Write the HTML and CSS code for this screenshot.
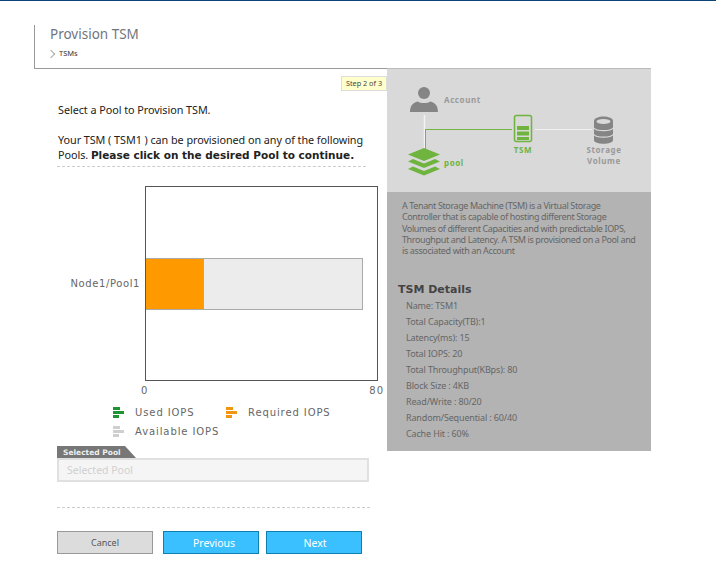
FILE: index.html
```html
<!DOCTYPE html>
<html>
<head>
<meta charset="UTF-8">
  <meta name="viewport" content="width=device-width, initial-scale=1.0">
  <title>Provision TSM</title>
  <link rel="stylesheet" href="styles.css">
</head>
<body>
<div id="topbar"></div>
<div id="page">
  <div id="header">
    <h1>Provision TSM</h1>
    <div id="crumb"><span class="crumb-arrow"></span>TSMs</div>
  </div>
  <div id="content">
    <div id="wizard">
      <div id="step">Step 2 of 3</div>
      <div id="intro">
        <p>Select a Pool to Provision TSM.</p>
        <p>Your TSM ( TSM1 ) can be provisioned on any of the following Pools. <b>Please click on the desired Pool to continue.</b></p>
      </div>

      <div id="chart">
        <div class="chart-row">
          <div class="chart-label">Node1/Pool1</div>
          <div class="chart-frame">
            <div class="bar"><div class="bar-used"></div></div>
          </div>
        </div>
        <div class="chart-axis"><span>0</span><span>80</span></div>
        <div class="legend">
          <div class="legend-item">
            <svg width="11" height="11" viewBox="0 0 11 11"><path fill="#1e9432" d="M0 0h7v3H0zM0 4h11v3H0zM0 8h6v3H0z"/></svg>
            Used IOPS
          </div>
          <div class="legend-item">
            <svg width="11" height="11" viewBox="0 0 11 11"><path fill="#f0960f" d="M0 0h7v3H0zM0 4h11v3H0zM0 8h6v3H0z"/></svg>
            Required IOPS
          </div>
          <div class="legend-item">
            <svg width="11" height="11" viewBox="0 0 11 11"><path fill="#cfcfcf" d="M0 0h7v3H0zM0 4h11v3H0zM0 8h6v3H0z"/></svg>
            Available IOPS
          </div>
        </div>
      </div>

      <div id="selected">
        <div class="tab">Selected Pool</div>
        <input type="text" placeholder="Selected Pool" disabled>
      </div>

      <div id="buttons">
        <button class="btn btn-cancel">Cancel</button>
        <button class="btn btn-blue">Previous</button>
        <button class="btn btn-blue">Next</button>
      </div>
    </div>

    <div id="side">
      <div id="diagram">
        <svg width="264" height="123" viewBox="0 0 264 123">
          <path d="M37.500 46v34" stroke="#f2f2f2" stroke-width="1.500" fill="none"/>
          <path d="M38 60.500h87M38.500 60v20" stroke="#74b545" stroke-width="1" fill="none"/>
          <path d="M148 60.500h57" stroke="#f2f2f2" stroke-width="1" fill="none"/>
          <!-- account -->
          <circle cx="37" cy="24" r="6" fill="#858585"/>
          <path d="M23 43c0-8 5-10 8-10.500 2 2 10 2 12 0 3 .5 8 2.500 8 10.500z" fill="#858585"/>
          <!-- pool -->
          <path d="M37 79l16 6.500-16 6.500-16-6.500z" fill="#6fb43f"/>
          <path d="M26 90l11 4.500 11-4.500 5 2.500-16 6.500-16-6.500z" fill="#6fb43f"/>
          <path d="M26 97.500l11 4.500 11-4.500 5 2.500-16 6.500-16-6.500z" fill="#6fb43f"/>
          <!-- tsm -->
          <rect x="127.500" y="46.500" width="17" height="26" rx="2" fill="none" stroke="#6fb43f" stroke-width="1.500"/>
          <path d="M130 57h12v4h-12zM130 62.500h12v4h-12zM130 68h12v3h-12z" fill="#6fb43f"/>
          <!-- volume -->
          <path d="M207 52c0-6 19-6 19 0v19c0 5-19 5-19 0z" fill="#858585"/>
          <ellipse cx="216.500" cy="52.500" rx="7" ry="2.500" fill="#d9d9d9"/>
          <path d="M207 59c2 3.500 17 3.500 19 0M207 65.500c2 3.500 17 3.500 19 0" stroke="#d9d9d9" stroke-width="1.200" fill="none"/>
          <text class="dg-text" x="57" y="34">Account</text>
          <text class="dg-text dg-green" x="57" y="97">pool</text>
          <text class="dg-text dg-green" x="136" y="84" text-anchor="middle">TSM</text>
          <text class="dg-text" x="217" y="84" text-anchor="middle">Storage</text>
          <text class="dg-text" x="217" y="95" text-anchor="middle">Volume</text>
        </svg>
      </div>
      <div id="details">
        <p id="about">A Tenant Storage Machine (TSM) is a Virtual Storage Controller that is capable of hosting different Storage Volumes of different Capacities and with predictable IOPS, Throughput and Latency. A TSM is provisioned on a Pool and is associated with an Account</p>
        <h2>TSM Details</h2>
        <ul>
          <li>Name: TSM1</li>
          <li>Total Capacity(TB):1</li>
          <li>Latency(ms): 15</li>
          <li>Total IOPS: 20</li>
          <li>Total Throughput(KBps): 80</li>
          <li>Block Size : 4KB</li>
          <li>Read/Write : 80/20</li>
          <li>Random/Sequential : 60/40</li>
          <li>Cache Hit : 60%</li>
        </ul>
      </div>
    </div>
  </div>
</div>
</body>
</html>
```
FILE: styles.css
```css
body {
  font-family: "Noto Sans", Arial, sans-serif;
  margin: 0;
  padding: 0;
  background: #fff;
  color: #222;
  font-size: 11px;
}

#topbar {
  height: 1px;
  background: #0d4478;
}

#page {
  padding: 24px 0 0 34px;
}

/* page title */
#header {
  width: 353px;
  height: 43px;
  box-sizing: border-box;
  border-left: 1px solid #999;
  padding-left: 15px;
}

h1 {
  margin: 0;
  font-size: 13.500px;
  font-weight: normal;
  line-height: 19px;
  color: #6f7680;
}

#crumb {
  display: flex;
  align-items: center;
  margin-top: 4px;
  font-size: 7.500px;
  line-height: 11px;
  color: #333;
}

.crumb-arrow {
  width: 5px;
  height: 5px;
  margin: 0 5px 0 -2px;
  border-top: 1px solid #aaa;
  border-right: 1px solid #aaa;
  transform: rotate(45deg);
}

#content {
  display: flex;
  align-items: flex-start;
}

/* left column */
#wizard {
  position: relative;
  width: 353px;
  height: 492px;
  box-sizing: border-box;
  border-top: 1px solid #999;
  padding: 33px 0 0 23px;
}

#step {
  position: absolute;
  top: 7px;
  right: 0;
  width: 46px;
  height: 15px;
  box-sizing: border-box;
  background: #ffffcc;
  border: 1px solid #ddd;
  font-size: 7.300px;
  line-height: 13px;
  text-align: center;
  color: #444;
}

#intro {
  width: 309px;
  height: 64px;
  border-bottom: 1px dashed #ccc;
  font-size: 10.800px;
  line-height: 15px;
  letter-spacing: -0.05px;
}

#intro p {
  margin: 0 -8px 15px 1px;
}

#intro b {
  font-family: "DejaVu Sans", sans-serif;
  font-size: 10.500px;
  letter-spacing: 0;
}

#chart {
  margin-top: 19px;
  font-family: "DejaVu Sans", sans-serif;
  font-size: 10px;
  color: #666;
}

.chart-row {
  display: flex;
  align-items: center;
}

.chart-label {
  width: 83px;
  padding-right: 5px;
  text-align: right;
  letter-spacing: 0.6px;
  white-space: nowrap;
}

.chart-frame {
  display: flex;
  align-items: center;
  width: 233px;
  height: 195px;
  box-sizing: border-box;
  border: 1px solid #555;
}

.bar {
  width: 217px;
  height: 52px;
  box-sizing: border-box;
  background: #ececec;
  border: 1px solid #aaa;
  border-left: 0;
}

.bar-used {
  width: 57px;
  height: 100%;
  background: #ff9900;
  border-right: 1px solid #aaa;
}

.chart-axis {
  display: flex;
  justify-content: space-between;
  width: 243px;
  margin: 3px 0 0 84px;
  line-height: 14px;
  letter-spacing: 1px;
}

.legend {
  display: flex;
  flex-wrap: wrap;
  width: 230px;
  margin: 5px 0 0 56px;
  letter-spacing: 0.9px;
}

.legend-item {
  display: flex;
  align-items: center;
  gap: 11px;
  min-width: 113px;
  height: 19px;
}

/* selected pool */
#selected {
  margin-top: 5px;
}

.tab {
  width: 79px;
  height: 12px;
  padding-left: 6px;
  box-sizing: border-box;
  background: #777;
  clip-path: polygon(0 0, 68px 0, 100% 100%, 0 100%);
  font-family: "DejaVu Sans", sans-serif;
  font-size: 7.500px;
  font-weight: bold;
  line-height: 14px;
  color: #eee;
}

#selected input {
  display: block;
  width: 312px;
  height: 24px;
  box-sizing: border-box;
  padding: 0 8px 1px;
  background: #f5f5f5;
  border: 2px solid #e0e0e0;
  font-family: "Noto Sans", Arial, sans-serif;
  font-size: 10.500px;
}

#selected input::placeholder {
  color: #d0d0d0;
}

/* buttons */
#buttons {
  display: flex;
  width: 313px;
  margin-top: 25px;
  padding-top: 23px;
  border-top: 1px dashed #ccc;
}

.btn {
  flex: none;
  width: 96px;
  height: 23px;
  margin-right: 10px;
  box-sizing: border-box;
  padding: 0;
  font-family: "Noto Sans", Arial, sans-serif;
  font-size: 10.500px;
}

.btn + .btn + .btn {
  margin-left: -3px;
}

.btn-cancel {
  background: #dcdcdc;
  border: 1px solid #999;
  font-size: 9px;
  color: #555;
}

.btn-blue {
  padding-left: 2px;
  background: #3bc0ff;
  border: 1px solid #0e7fae;
  color: #fff;
}

.btn-cancel + .btn-blue {
  padding-left: 6px;
}

/* right column */
#side {
  width: 264px;
  background: #b3b3b3;
}

#diagram {
  height: 124px;
  background: #d9d9d9;
  border-top: 1px solid #bbb;
  box-sizing: border-box;
}

#diagram svg {
  display: block;
}

.dg-text {
  font-family: "Noto Sans", sans-serif;
  font-size: 8px;
  font-weight: bold;
  letter-spacing: 0.6px;
  fill: #999;
}

.dg-green {
  fill: #6fb43f;
}

#details {
  height: 259px;
  box-sizing: border-box;
  padding: 8px 12px 0 15px;
  color: #666;
  font-size: 9px;
}

#about {
  margin: 0;
  line-height: 11.300px;
  width: 236px;
  letter-spacing: -0.38px;
}

h2 {
  margin: 27px 0 0 -4px;
  font-family: "DejaVu Sans", sans-serif;
  font-size: 11px;
  line-height: 14px;
  color: #444;
}

ul {
  list-style: none;
  margin: 1px 0 0 4px;
  padding: 0;
}

li {
  line-height: 16px;
  letter-spacing: -0.15px;
}
```
